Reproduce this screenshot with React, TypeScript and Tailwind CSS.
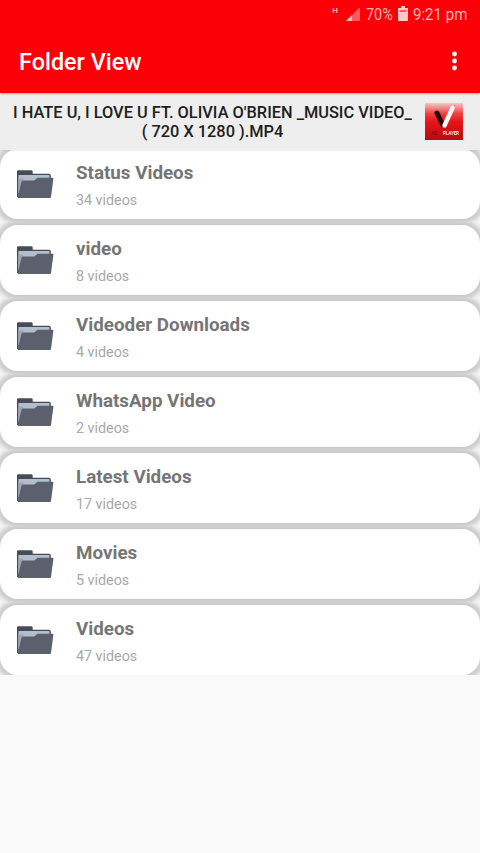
const folders = [
  { name: "Status Videos", count: 34 },
  { name: "video", count: 8 },
  { name: "Videoder Downloads", count: 4 },
  { name: "WhatsApp Video", count: 2 },
  { name: "Latest Videos", count: 17 },
  { name: "Movies", count: 5 },
  { name: "Videos", count: 47 },
];

function FolderIcon() {
  return (
    <svg width="38" height="30" viewBox="0 0 38 30" className="shrink-0">
      <path d="M1 2.4Q1 1.2 2.2 1.2H15.3Q16.6 1.2 16.7 2.4V4.8H33.2Q34.8 4.8 34.8 6.3V28H1Z" fill="#484b58" />
      <path d="M2.4 6H33.4V24H2.4Z" fill="#b4bfcd" />
      <path d="M2.4 9.5H7V14L3 26H2.4Z" fill="#9ba6b5" />
      <path d="M5.5 12.8Q5.8 11.6 7 11.6H18.3L21.5 8.8H36.6Q37.6 8.8 37.4 9.8L35 28Q34.9 29 34 29H2.5Q1.5 29 1.7 28Z" fill="#5c606d" />
    </svg>
  );
}

function MoreIcon() {
  return (
    <svg width="6" height="20" viewBox="0 0 6 20" fill="currentColor" className="-mt-[1px]">
      <circle cx="3.5" cy="3" r="2.4" />
      <circle cx="3.5" cy="10" r="2.4" />
      <circle cx="3.5" cy="17" r="2.4" />
    </svg>
  );
}

function StatusBar() {
  return (
    <div className="flex h-[30px] justify-end pr-[13px] text-[16px] leading-[30px] text-[#ffb5b5]">
      <span className="mr-[8px] mt-[5px] text-[8px] font-bold leading-[11px]">H</span>
      <svg width="15" height="14" viewBox="0 0 15 14" className="mr-[5px] mt-[7px]">
        <path d="M0 14L14 0V14Z" fill="#ff5a5e" />
        <path d="M0 14L6 8V14Z" fill="#ffb5b5" />
      </svg>
      <span className="w-[28px] origin-left scale-x-[.9]">70%</span>
      <svg width="10" height="15" viewBox="0 0 10 15" className="ml-[4px] mr-[5px] mt-[6px]">
        <path d="M3 0H7V2H10V15H0V2H3Z" fill="#ffc9c9" />
        <path d="M1.5 4H8.5V6H1.5Z" fill="#f9585c" />
      </svg>
      <span className="w-[54px] origin-left scale-x-[.94] whitespace-nowrap">9:21 pm</span>
    </div>
  );
}

function PlayerLogo() {
  return (
    <svg width="38" height="37" viewBox="0 0 38 37" className="shrink-0">
      <defs>
        <linearGradient id="logo-bg" x1="0" y1="0" x2="0" y2="1">
          <stop offset="0" stopColor="#f5c6c6" />
          <stop offset="0.28" stopColor="#ed4345" />
          <stop offset="0.5" stopColor="#e91317" />
          <stop offset="1" stopColor="#b50d10" />
        </linearGradient>
      </defs>
      <rect width="38" height="37" fill="url(#logo-bg)" />
      <path d="M12 10L17.5 21.5" stroke="#2b0808" strokeWidth="5" strokeLinecap="round" />
      <path d="M27.5 5L19.5 22.5" stroke="#fff5f5" strokeWidth="4.5" strokeLinecap="round" />
      <text x="6.5" y="32" fontFamily="Roboto, sans-serif" fontSize="4.5" fontWeight="700" fill="#8c090c">HD</text>
      <text x="18" y="32" fontFamily="Roboto, sans-serif" fontSize="4.5" fontWeight="700" fill="#ffdede" textLength="16">PLAYER</text>
    </svg>
  );
}

export default function App() {
  return (
    <div className="flex h-[853px] w-[480px] flex-col overflow-hidden bg-[#fafafa] font-['Roboto',sans-serif]">

      {/* HEADER */}
      <header className="relative z-20 h-[93px] shrink-0 bg-[#fb0007] shadow-[0_1px_2px_rgba(0,0,0,0.3)]">
        <StatusBar />
        <div className="flex h-[63px] items-center justify-between pl-[19px] pr-[23px] text-white">
          <h1 className="text-[23.4px] font-medium leading-[30px]">Folder View</h1>
          <MoreIcon />
        </div>
      </header>

      {/* LAST PLAYED */}
      <section className="relative z-10 flex h-[57px] shrink-0 items-center bg-[#eeeeee] pl-[12px] pr-[17px] shadow-[0_1px_1px_rgba(0,0,0,0.06)]">
        <p className="w-[401px] whitespace-nowrap text-center text-[16.35px] font-medium leading-[19px] text-[#202020]">
          I HATE U, I LOVE U FT. OLIVIA O'BRIEN _MUSIC VIDEO_
          <br />( 720 X 1280 ).MP4
        </p>
        <div className="ml-auto">
          <PlayerLogo />
        </div>
      </section>

      {/* FOLDERS */}
      <ul className="-mt-[4px] h-[529px] overflow-hidden">
        {folders.map((folder) => (
          <li key={folder.name} className="h-[76px] overflow-hidden py-[3px]">
            <div className="flex h-[70px] rounded-[18px] bg-white pl-[16px] pt-[20px] shadow-[0_0_6px_5px_rgba(0,0,0,0.21)]">
              <FolderIcon />
              <div className="-mt-[8px] ml-[22px]">
                <h2 className="text-[18.8px] font-bold leading-[24px] text-[#757575]">{folder.name}</h2>
                <p className="mt-[6px] text-[14.3px] leading-[18px] text-[#a8a8a8]">{folder.count} videos</p>
              </div>
            </div>
          </li>
        ))}
      </ul>
    </div>
  );
}
